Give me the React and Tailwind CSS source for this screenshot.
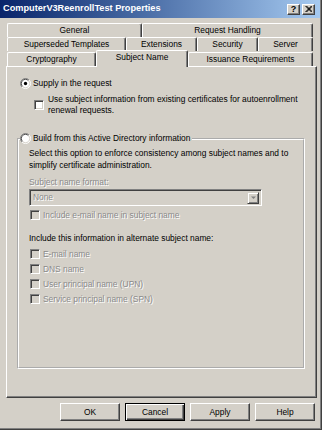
import React from "react";

const FONT = "font-['Liberation_Sans',Arial,sans-serif]";
const DIS = "text-[#8a8a8a] [text-shadow:1px_1px_0_#ffffff]";

function Radio({ checked }) {
  return (
    <svg width="11" height="11" viewBox="0 0 12 12" className="shrink-0">
      <circle cx="6" cy="6" r="5" fill="#ffffff" />
      <path d="M9.9 2.1 A5.5 5.5 0 0 0 2.1 9.9" stroke="#808080" strokeWidth="1" fill="none" />
      <path d="M9.9 2.1 A5.5 5.5 0 0 1 2.1 9.9" stroke="#ffffff" strokeWidth="1" fill="none" />
      <path d="M9.2 2.8 A4.5 4.5 0 0 0 2.8 9.2" stroke="#404040" strokeWidth="1" fill="none" />
      <path d="M9.2 2.8 A4.5 4.5 0 0 1 2.8 9.2" stroke="#d4d0c8" strokeWidth="1" fill="none" />
      {checked && <circle cx="6" cy="6" r="1.8" fill="#000000" />}
    </svg>
  );
}

function Check({ disabled }) {
  return (
    <div
      className={
        "w-[10px] h-[10px] shrink-0 border border-t-[#808080] border-l-[#808080] border-r-white border-b-white shadow-[inset_1px_1px_0_#404040,inset_-1px_-1px_0_#d4d0c8] " +
        (disabled ? "bg-[#d4d0c8]" : "bg-white")
      }
    />
  );
}

function Tab({ w, children }) {
  return (
    <div
      style={{ width: w }}
      className="h-[14px] shrink-0 flex items-center justify-center border-l border-t border-l-white border-t-white border-r border-r-[#404040] shadow-[inset_-1px_0_0_#808080] rounded-t-[2px] leading-none"
    >
      {children}
    </div>
  );
}

function DisCheckRow({ children, cls = "mt-[3px]" }) {
  return (
    <div className={"flex items-center h-[12px] " + cls}>
      <div className="ml-[1px]">
        <Check disabled />
      </div>
      <span className={"ml-[3px] leading-[12px] " + DIS}>{children}</span>
    </div>
  );
}

function Btn({ children, def }) {
  return (
    <div
      className={
        "w-[60px] h-[18px] flex items-center justify-center leading-none " +
        (def
          ? "border border-black shadow-[inset_1px_1px_0_#ffffff,inset_-1px_-1px_0_#404040,inset_-2px_-2px_0_#808080]"
          : "border border-t-white border-l-white border-r-[#404040] border-b-[#404040] shadow-[inset_-1px_-1px_0_#808080]")
      }
    >
      {children}
    </div>
  );
}

export default function App() {
  return (
    <div
      className={
        "w-[322px] h-[430px] bg-[#d4d0c8] flex flex-col text-[8.4px] text-black border-r border-b border-r-[#404040] border-b-[#404040] shadow-[inset_-1px_-1px_0_#808080] overflow-hidden " +
        FONT
      }
    >
      {/* Title bar */}
      <div className="h-[18px] shrink-0 mr-[1px] bg-gradient-to-r from-[#0a246a] to-[#a6caf0] flex items-center pl-[3px] pr-[5px]">
        <span className="text-white font-bold text-[9.2px] leading-none">ComputerV3ReenrollTest Properties</span>
        <div className="ml-auto flex items-center gap-[2px]">
          <div className="w-[13px] h-[11px] bg-[#d4d0c8] border border-t-white border-l-white border-r-[#404040] border-b-[#404040] shadow-[inset_-1px_-1px_0_#808080] flex items-center justify-center text-black font-bold text-[9px] leading-none">
            ?
          </div>
          <div className="w-[13px] h-[11px] bg-[#d4d0c8] border border-t-white border-l-white border-r-[#404040] border-b-[#404040] shadow-[inset_-1px_-1px_0_#808080] flex items-center justify-center">
            <svg width="7" height="6" viewBox="0 0 7 6">
              <path d="M0.5 0 L6.5 6 M1.5 0 L7.5 6 M6.5 0 L0.5 6 M7.5 0 L1.5 6" stroke="#000" strokeWidth="1" />
            </svg>
          </div>
        </div>
      </div>

      {/* Tabs */}
      <div className="mt-[5px] ml-[7px] flex flex-col">
        <div className="flex">
          <Tab w={135}>General</Tab>
          <Tab w={171}>Request Handling</Tab>
        </div>
        <div className="flex">
          <Tab w={119}>Superseded Templates</Tab>
          <Tab w={71}>Extensions</Tab>
          <Tab w={61}>Security</Tab>
          <Tab w={55}>Server</Tab>
        </div>
        <div className="flex items-end h-[15px]">
          <Tab w={89}>Cryptography</Tab>
          <div className="relative z-10 w-[92px] h-[17px] -mb-[1px] shrink-0 bg-[#d4d0c8] flex justify-center pt-[2px] border-l border-t border-l-white border-t-white border-r border-r-[#404040] shadow-[inset_-1px_0_0_#808080] rounded-t-[2px] leading-none">
            Subject Name
          </div>
          <Tab w={125}>Issuance Requirements</Tab>
        </div>
      </div>

      {/* Panel */}
      <div className="ml-[6px] w-[311px] h-[332px] shrink-0 flex flex-col border-l border-t border-l-white border-t-white border-r border-b border-r-[#404040] border-b-[#404040] shadow-[inset_-1px_-1px_0_#808080]">
        <div className="mt-[11px] ml-[13px] flex items-center h-[11px]">
          <Radio checked />
          <span className="ml-[2px] leading-[11px]">Supply in the request</span>
        </div>

        <div className="mt-[5px] ml-[27px] flex items-center">
          <Check />
          <div className="ml-[4px] leading-[11px]">
            <div>Use subject information from existing certificates for autoenrollment</div>
            <div>renewal requests.</div>
          </div>
        </div>

        <fieldset className="mt-[17px] ml-[10px] w-[288px] h-[236px] border-2 border-white [border-style:groove]">
          <legend className="ml-[1px] pr-[2px] flex items-center h-[11px]">
            <Radio />
            <span className="ml-[2px] leading-[11px]">Build from this Active Directory information</span>
          </legend>
          <div className="pl-[10px] pt-[3px] flex flex-col">
            <div className="leading-[12px]">
              <div>Select this option to enforce consistency among subject names and to</div>
              <div>simplify certificate administration.</div>
            </div>
            <div className={"mt-[5px] leading-[12px] " + DIS}>Subject name format:</div>
            <div className="mt-[1px] w-[233px] h-[17px] flex items-center bg-[#d4d0c8] border border-t-[#808080] border-l-[#808080] border-r-white border-b-white shadow-[inset_1px_1px_0_#404040,inset_-1px_-1px_0_#d4d0c8]">
              <span className={"ml-[3px] leading-none " + DIS}>None</span>
              <div className="ml-auto mr-[2px] w-[12px] h-[12px] flex items-center justify-center bg-[#d4d0c8] border border-t-[#d4d0c8] border-l-[#d4d0c8] border-r-[#404040] border-b-[#404040] shadow-[inset_1px_1px_0_#ffffff,inset_-1px_-1px_0_#808080]">
                <svg width="7" height="5" viewBox="0 0 7 5">
                  <path d="M1 1.5 L6 1.5 L3.5 4 Z" fill="#808080" />
                  <path d="M2 2.5 L7 2.5 L4.5 5 Z" fill="#ffffff" opacity="0" />
                </svg>
              </div>
            </div>
            <DisCheckRow>Include e-mail name in subject name</DisCheckRow>
            <div className="mt-[11px] leading-[12px]">Include this information in alternate subject name:</div>
            <DisCheckRow cls="mt-[4px]">E-mail name</DisCheckRow>
            <DisCheckRow>DNS name</DisCheckRow>
            <DisCheckRow>User principal name (UPN)</DisCheckRow>
            <DisCheckRow>Service principal name (SPN)</DisCheckRow>
          </div>
        </fieldset>
      </div>

      {/* Buttons */}
      <div className="mt-[5px] flex justify-end gap-[5px] pr-[6px]">
        <Btn>OK</Btn>
        <Btn def>Cancel</Btn>
        <Btn>Apply</Btn>
        <Btn>Help</Btn>
      </div>
    </div>
  );
}
